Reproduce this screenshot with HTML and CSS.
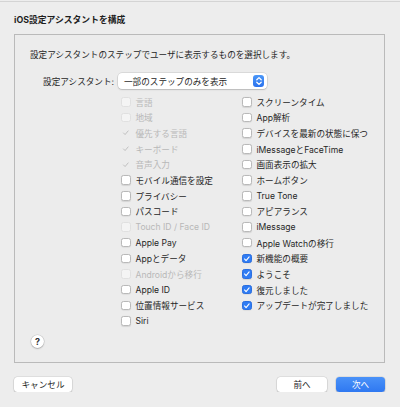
FILE: index.html
```html
<!DOCTYPE html>
<html lang="ja">
<head>
    <meta charset="UTF-8">
    <title>iOS設定アシスタントを構成</title>
    <link rel="stylesheet" href="styles.css">
</head>
<body>
<div class="topline"></div>
<h1 class="title">iOS設定アシスタントを構成</h1>

<div class="panel">
    <p class="intro">設定アシスタントのステップでユーザに表示するものを選択します。</p>

    <div class="setting">
        <span class="setting-label">設定アシスタント:</span>
        <div class="popup">
            <span>一部のステップのみを表示</span>
            <span class="stepper">
                <svg width="8" height="10" viewBox="0 0 8 10"><path d="M1.8 3.8 L4 1.6 L6.2 3.8 M1.8 6.2 L4 8.4 L6.2 6.2" fill="none" stroke="#fff" stroke-width="1.3" stroke-linecap="round" stroke-linejoin="round"/></svg>
            </span>
        </div>
    </div>

    <div class="steps">
        <!-- 左の列 -->
        <div class="col">
            <label class="step disabled"><span class="box"></span>言語</label>
            <label class="step disabled"><span class="box"></span>地域</label>
            <label class="step disabled checked"><span class="box"><svg viewBox="0 0 10 10"><path d="M2 5.3 L4.1 7.4 L8.2 2.6"/></svg></span>優先する言語</label>
            <label class="step disabled checked"><span class="box"><svg viewBox="0 0 10 10"><path d="M2 5.3 L4.1 7.4 L8.2 2.6"/></svg></span>キーボード</label>
            <label class="step disabled checked"><span class="box"><svg viewBox="0 0 10 10"><path d="M2 5.3 L4.1 7.4 L8.2 2.6"/></svg></span>音声入力</label>
            <label class="step"><span class="box"></span>モバイル通信を設定</label>
            <label class="step"><span class="box"></span>プライバシー</label>
            <label class="step"><span class="box"></span>パスコード</label>
            <label class="step disabled"><span class="box"></span>Touch ID / Face ID</label>
            <label class="step"><span class="box"></span>Apple Pay</label>
            <label class="step"><span class="box"></span>Appとデータ</label>
            <label class="step disabled"><span class="box"></span>Androidから移行</label>
            <label class="step"><span class="box"></span>Apple ID</label>
            <label class="step"><span class="box"></span>位置情報サービス</label>
            <label class="step"><span class="box"></span>Siri</label>
        </div>
        <!-- 右の列 -->
        <div class="col">
            <label class="step"><span class="box"></span>スクリーンタイム</label>
            <label class="step"><span class="box"></span>App解析</label>
            <label class="step"><span class="box"></span>デバイスを最新の状態に保つ</label>
            <label class="step"><span class="box"></span>iMessageとFaceTime</label>
            <label class="step"><span class="box"></span>画面表示の拡大</label>
            <label class="step"><span class="box"></span>ホームボタン</label>
            <label class="step"><span class="box"></span>True Tone</label>
            <label class="step"><span class="box"></span>アピアランス</label>
            <label class="step"><span class="box"></span>iMessage</label>
            <label class="step"><span class="box"></span>Apple Watchの移行</label>
            <label class="step checked"><span class="box"><svg viewBox="0 0 10 10"><path d="M2 5.3 L4.1 7.4 L8.2 2.6"/></svg></span>新機能の概要</label>
            <label class="step checked"><span class="box"><svg viewBox="0 0 10 10"><path d="M2 5.3 L4.1 7.4 L8.2 2.6"/></svg></span>ようこそ</label>
            <label class="step checked"><span class="box"><svg viewBox="0 0 10 10"><path d="M2 5.3 L4.1 7.4 L8.2 2.6"/></svg></span>復元しました</label>
            <label class="step checked"><span class="box"><svg viewBox="0 0 10 10"><path d="M2 5.3 L4.1 7.4 L8.2 2.6"/></svg></span>アップデートが完了しました</label>
        </div>
    </div>

    <button class="help">?</button>
</div>

<div class="footer">
    <button class="btn">キャンセル</button>
    <div class="nav">
        <button class="btn prev">前へ</button>
        <button class="btn primary">次へ</button>
    </div>
</div>
</body>
</html>
```

FILE: styles.css
```css
body {
    margin: 0;
    background: #ededed;
    font-family: "Inter", "Noto Sans CJK JP", sans-serif;
    font-size: 8.6px;
    color: #262626;
}

.topline {
    height: 1px;
    margin-top: 1px;
    background: #d4d4d4;
}

.title {
    margin: 12px 14px 0;
    font-size: 8.8px;
    line-height: 12px;
    font-weight: bold;
    color: #1e1e1e;
}

.panel {
    margin: 8px 15px 0 14px;
    border: 1px solid #bababa;
    background: #ececec;
    padding: 14px 15px 14px 15px;
}

.intro {
    margin: 0;
    line-height: 12px;
}

.setting {
    display: flex;
    align-items: center;
    margin-top: 12px;
    height: 16px;
}

.setting-label {
    width: 84px;
    text-align: right;
}

.popup {
    margin-left: 4px;
    width: 149px;
    height: 16px;
    box-sizing: border-box;
    display: flex;
    align-items: center;
    justify-content: space-between;
    padding: 0 3px 0 6px;
    background: #fff;
    border-radius: 4px;
    box-shadow: 0 0 0 0.5px rgba(0, 0, 0, 0.15), 0 1px 1.5px rgba(0, 0, 0, 0.15);
}

.stepper {
    width: 11px;
    height: 12px;
    border-radius: 3px;
    background: linear-gradient(#4b97f8, #2b72ee);
    display: flex;
    align-items: center;
    justify-content: center;
}

.steps {
    display: flex;
    margin: 5px 0 0 91px;
}

.col {
    width: 121px;
    display: grid;
    grid-auto-rows: 15.67px;
}

.step {
    display: flex;
    align-items: center;
    white-space: nowrap;
}

.box {
    width: 9.5px;
    height: 9.5px;
    box-sizing: border-box;
    margin-right: 5px;
    border-radius: 2.5px;
    background: #fff;
    border: 0.5px solid #b9b9b9;
    box-shadow: 0 0.5px 1px rgba(0, 0, 0, 0.1);
    display: flex;
}

.box svg {
    width: 100%;
    height: 100%;
    fill: none;
    stroke: #fff;
    stroke-width: 1.5;
    stroke-linecap: round;
    stroke-linejoin: round;
}

.step.checked .box {
    background: #2f7cf4;
    border-color: #2a6fe0;
}

.step.disabled {
    color: #b8b8b8;
}

.step.disabled .box {
    background: #f4f4f4;
    border-color: #e0e0e0;
    box-shadow: none;
}

.step.disabled.checked .box {
    background: transparent;
    border-color: transparent;
}

.step.disabled.checked .box svg {
    stroke: #b0b0b0;
    stroke-width: 1;
}

.help {
    display: block;
    margin: 6px 0 0 1px;
    width: 13px;
    height: 13px;
    padding: 0;
    border: none;
    border-radius: 50%;
    background: #fff;
    box-shadow: 0 0 0 0.5px rgba(0, 0, 0, 0.15), 0 1px 1.5px rgba(0, 0, 0, 0.2);
    font-family: "Inter", sans-serif;
    font-size: 9px;
    font-weight: bold;
    line-height: 13px;
    color: #333;
}

.footer {
    display: flex;
    justify-content: space-between;
    margin: 14px 15px 0 14px;
}

.nav {
    display: flex;
    gap: 9px;
}

.btn {
    height: 15px;
    padding: 0;
    border: none;
    border-radius: 3.5px;
    background: #fff;
    box-shadow: 0 0 0 0.5px rgba(0, 0, 0, 0.12), 0 1px 1.5px rgba(0, 0, 0, 0.18);
    font-family: "Inter", "Noto Sans CJK JP", sans-serif;
    font-size: 8.6px;
    color: #262626;
    width: 58px;
}

.prev {
    width: 50px;
}

.primary {
    width: 49px;
    color: #fff;
    background: linear-gradient(#4a92f8, #2f78f1);
}
```
